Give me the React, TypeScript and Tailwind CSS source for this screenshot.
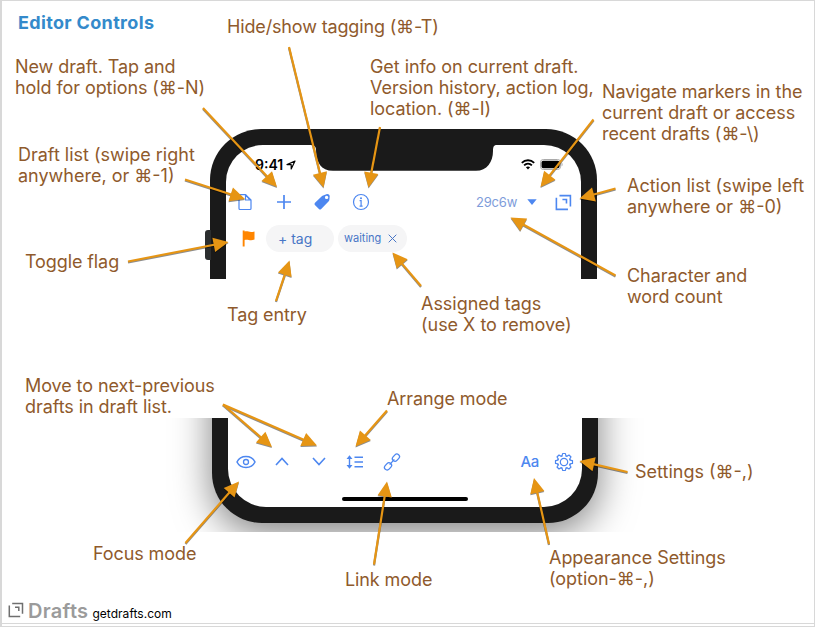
import type { ReactNode } from "react";

type Arrow = [number, number, number, number];

const arrows: Arrow[] = [
  [203, 108, 277, 187],
  [289, 47, 323.5, 187.5],
  [380, 127, 368.5, 187.5],
  [593.5, 119.5, 540.5, 187],
  [185, 179.5, 245, 199],
  [615.5, 188.5, 579.5, 198.5],
  [128, 261.5, 228.5, 242],
  [276, 301, 289.5, 260.5],
  [421, 286, 392.5, 252.5],
  [615.5, 275.5, 510.5, 217.5],
  [223, 404.5, 272, 447],
  [223, 404.5, 317, 445.5],
  [387, 410.5, 355.5, 446.5],
  [185.5, 543, 239, 481.5],
  [374, 564.5, 387, 481.5],
  [549, 544, 534, 478],
  [627.5, 472, 579.5, 461],
];

function Arrows() {
  return (
    <svg className="pointer-events-none absolute inset-0 drop-shadow-[0.5px_1px_0.5px_rgba(0,0,0,0.45)]" width="815" height="627">
      {arrows.map(([x1, y1, x2, y2], i) => {
        const len = Math.hypot(x2 - x1, y2 - y1);
        const angle = (Math.atan2(y2 - y1, x2 - x1) * 180) / Math.PI;
        return (
          <g key={i} transform={`translate(${x1} ${y1}) rotate(${angle})`} fill="#e69514">
            <rect x="0" y="-1.1" width={len - 12} height="2.2" />
            <path d={`M${len} 0l-15 -7.2v14.4z`} />
          </g>
        );
      })}
    </svg>
  );
}

function Note({ at, children }: { at: string; children: ReactNode }) {
  return (
    <p className={`absolute whitespace-pre text-[18px] leading-[21px] text-[#8f5a2c] ${at}`}>{children}</p>
  );
}

function DraftsMark({ size, color }: { size: number; color: string }) {
  return (
    <svg width={size} height={size} viewBox="0 0 16 16" fill="none" stroke={color} strokeWidth="1.5">
      <path d="M4.2 1.5H14.5V11.8" />
      <path d="M1.3 3.6V14.5H12.2" />
      <path d="M7 5.2H10.8V9" />
    </svg>
  );
}

function TopPhone() {
  return (
    <section className="relative ml-[210px] mt-[95px] h-[150px] w-[387px] rounded-t-[51px] bg-[#1a1a1a] px-4 pt-4">
      <div className="absolute left-[-5px] top-[101px] h-[30px] w-[6px] rounded-l-[3px] bg-[#2b2d2e]" />
      <div className="relative flex h-[134px] flex-col rounded-t-[37px] bg-white">
        <svg className="absolute left-[83px] top-[-1px]" width="188" height="27" fill="#1a1a1a">
          <path d="M0 0V1C5 1 7 2 7 6C7 18 12 26.800 24 26.800H167C178 26.800 184 18 184 7C184 2.500 185 1 188 1V0Z" />
        </svg>
        <div className="flex h-9 items-center pl-[29px] pr-[18px] pt-[3px]">
          <span className="text-[14px] font-semibold leading-none text-black">9:41</span>
          <svg className="ml-[3px]" width="10" height="10" viewBox="0 0 10 10" fill="none" stroke="#000" strokeWidth="1.2" strokeLinejoin="round">
            <path d="M9 1L1 4.600H5.200V9Z" />
          </svg>
          <svg className="ml-auto" width="14" height="11" viewBox="0 0 14 11" fill="none" stroke="#000" strokeWidth="1.8">
            <path d="M.8 3.800C4.300.4 9.700.4 13.200 3.800" />
            <path d="M3.100 6.300C5.300 4.200 8.700 4.200 10.900 6.300" />
            <path d="M7 10.500L4.900 8.300C6 7.200 8 7.200 9.100 8.300Z" fill="#000" stroke="none" />
          </svg>
          <svg className="ml-[5px]" width="23" height="11" viewBox="0 0 23 11">
            <rect x=".5" y=".5" width="20" height="10" rx="2.800" fill="#fff" stroke="#aaa" />
            <rect x="1.500" y="1.700" width="18" height="7.600" rx="1.700" />
            <path d="M21.500 3.500C23 4 23 7 21.500 7.500Z" fill="#aaa" />
          </svg>
        </div>
        <div className="flex h-[42px] items-center pl-[10px] text-[#4d87f0]">
          <svg width="18" height="18" viewBox="0 0 18 18" fill="none" stroke="currentColor" strokeWidth="1.2" strokeLinejoin="round">
            <path d="M4 1.600H9.500L15 7V15.500A1 1 0 0 1 14 16.500H4A1 1 0 0 1 3 15.500V2.600A1 1 0 0 1 4 1.600Z" />
            <path d="M9.500 1.600V7H15M9.500 1.600L13.800 7" />
          </svg>
          <svg className="ml-[21px]" width="18" height="18" viewBox="0 0 18 18" stroke="currentColor" strokeWidth="1.700">
            <path d="M9 2V16M2 9H16" />
          </svg>
          <svg className="ml-[20px]" width="18" height="18" viewBox="0 0 18 18" fill="currentColor">
            <path fillRule="evenodd" d="M10.200 2.400L14 1.100Q16.800 1 16.700 3.600L16.400 6.700Q16.200 7.800 15.500 8.600L8.200 16Q7 17.200 5.900 16L1.900 12Q.9 10.900 2 9.700L8.800 3.200Q9.500 2.600 10.200 2.400ZM13.600 2.700A1.700 1.700 0 1 0 13.600 6.100A1.700 1.700 0 1 0 13.600 2.700Z" />
          </svg>
          <svg className="ml-[21px]" width="18" height="18" viewBox="0 0 18 18" fill="none" stroke="currentColor" strokeWidth="1.200">
            <circle cx="9" cy="9" r="7.500" />
            <circle cx="9" cy="5.200" r="1" fill="currentColor" stroke="none" />
            <path d="M7.600 7.700H9.100V13M7.600 13.100H10.600" />
          </svg>
          <span className="ml-[106px] text-[13px] leading-none tracking-[-0.2px] text-[#7e9cda]">29c6w</span>
          <svg className="absolute left-[301px]" width="10" height="6" fill="currentColor">
            <path d="M.3.300H9.700L5 5.900Z" />
          </svg>
          <div className="absolute left-[329px]">
            <DraftsMark size={17} color="#4d87f0" />
          </div>
        </div>
        <div className="flex h-[31px] items-center pl-[16px] text-[#4876c6]">
          <svg width="13" height="17" viewBox="0 0 13 17" fill="#ff8500">
            <path d="M.7.500H2.600V1.600C6 .6 7 3 12.500 1.500V9.600C8 11.300 6 9 2.600 10V16.500H.7Z" />
          </svg>
          <div className="ml-[11px] flex h-[27px] w-[68px] items-center rounded-full bg-[#f5f5f6] pl-3 text-[14px] leading-none">+ tag</div>
          <div className="ml-1 flex h-[27px] w-[69px] items-center rounded-full bg-[#f5f5f6] pl-[6px] text-[11px]">
            waiting
            <svg className="ml-[7px]" width="9" height="9" stroke="currentColor" fill="none">
              <path d="M.7 .7L8.300 8.300M8.300 .7L.7 8.300" />
            </svg>
          </div>
        </div>
      </div>
    </section>
  );
}

function BottomPhone() {
  const teeth = Array.from({ length: 8 }, (_, i) => i * 45);
  return (
    <section className="mt-[139px] ml-[150px] h-[114px] w-[510px] overflow-hidden">
      <div className="-mt-[200px] ml-[62px] h-[305px] w-[386px] rounded-b-[50px] bg-[#1a1a1a] px-4 pb-4 pt-[200px] shadow-[0_10px_38px_rgba(0,0,0,0.5)]">
        <div className="flex h-[89px] flex-col items-center rounded-b-[38px] bg-white">
          <div className="flex h-[76px] w-full items-center pl-[8px] pr-[8px] pt-[11px] text-[#4d87f0]">
            <svg width="20" height="14" viewBox="0 0 20 14" fill="none" stroke="currentColor" strokeWidth="1.500">
              <path d="M1 7C4.600 -.3 15.400 -.3 19 7C15.400 14.300 4.600 14.300 1 7Z" />
              <circle cx="10" cy="7" r="2.500" strokeWidth="1.300" />
            </svg>
            <svg className="ml-[19px]" width="14" height="9" fill="none" stroke="currentColor" strokeWidth="1.600">
              <path d="M1 8L7 1.500L13 8" />
            </svg>
            <svg className="ml-[23px]" width="14" height="9" fill="none" stroke="currentColor" strokeWidth="1.600">
              <path d="M1 1L7 7.500L13 1" />
            </svg>
            <svg className="ml-5" width="18" height="14" fill="none" stroke="currentColor" strokeWidth="1.400">
              <path d="M3.500 2V12M8.500 2.300H17M8.500 7H17M8.500 11.700H17" />
              <path d="M3.500 .2L6.500 4H.5ZM3.500 13.800L6.500 10H.5Z" fill="currentColor" stroke="none" />
            </svg>
            <svg className="ml-[19px]" width="18" height="18" viewBox="0 0 18 18" fill="none" stroke="currentColor" strokeWidth="1.300">
              <g transform="rotate(-48 9 9)">
                <rect x="-.9" y="6.400" width="8" height="5.200" rx="2.600" />
                <rect x="10.900" y="6.400" width="8" height="5.200" rx="2.600" />
                <path d="M5.500 9H12.500" />
              </g>
            </svg>
            <span className="ml-auto mr-[15px] text-[15px] font-medium leading-none tracking-[-0.3px]">Aa</span>
            <svg width="20" height="20" viewBox="-10 -10 20 20" fill="none" stroke="currentColor" strokeWidth="1.200" strokeLinejoin="round">
              <circle r="3.700" />
              {teeth.map((a) => (
                <path key={a} transform={`rotate(${a})`} d="M-3.400 -5.500Q-1.900 -5.900 -1.700 -7L-1.400 -8.500H1.400L1.700 -7Q1.900 -5.900 3.400 -5.500" />
              ))}
            </svg>
          </div>
          <div className="mt-[3px] h-1 w-[126px] rounded-full bg-black" />
        </div>
      </div>
    </section>
  );
}

export default function App() {
  return (
    <main className="relative flex h-[627px] w-[815px] flex-col overflow-hidden border-b border-l-2 border-r border-t border-[#d8d8d8] bg-white font-['Inter',sans-serif]">
      <div className="-ml-[2px] flex h-[623px] flex-col border-b border-[#d8d8d8]">
        <h1 className="ml-[18px] mt-[11px] h-[22px] text-[18px] font-bold leading-[22px] tracking-[0.34px] text-[#348acb]">Editor Controls</h1>
        <TopPhone />
        <BottomPhone />
        <footer className="mt-auto flex h-[22px] items-baseline pl-2">
          <DraftsMark size={16} color="#6f6f6f" />
          <span className="ml-1 text-[20px] font-semibold leading-none tracking-[0.3px] text-[#9b9b9b]">Drafts</span>
          <span className="ml-[4px] text-[12px] leading-none tracking-[0.04px] text-black">getdrafts.com</span>
        </footer>
      </div>
      <div className="absolute -left-[2px] -top-px h-[627px] w-[815px]">
        <Arrows />
        <Note at="left-[227px] top-[16px] tracking-[-0.15px]">Hide/show tagging (⌘-T)</Note>
        <Note at="left-[15px] top-[56px] tracking-[-0.08px]">{"New draft. Tap and\nhold for options (⌘-N)"}</Note>
        <Note at="left-[370px] top-[56px] tracking-[-0.06px]">{"Get info on current draft.\nVersion history, action log,\nlocation. (⌘-I)"}</Note>
        <Note at="left-[602px] top-[81px] tracking-[-0.05px]">{"Navigate markers in the\ncurrent draft or access\nrecent drafts (⌘-\\)"}</Note>
        <Note at="left-[18px] top-[144px]">{"Draft list (swipe right\nanywhere, or ⌘-1)"}</Note>
        <Note at="left-[627px] top-[175px]">{"Action list (swipe left\nanywhere or ⌘-0)"}</Note>
        <Note at="left-[25px] top-[251px] tracking-[-0.1px]">Toggle flag</Note>
        <Note at="left-[227px] top-[304px] tracking-[-0.1px]">Tag entry</Note>
        <Note at="left-[421px] top-[293px] tracking-[-0.03px]">{"Assigned tags\n(use X to remove)"}</Note>
        <Note at="left-[627px] top-[265px] tracking-[-0.05px]">{"Character and\nword count"}</Note>
        <Note at="left-[25px] top-[375px] tracking-[-0.08px]">{"Move to next-previous\ndrafts in draft list."}</Note>
        <Note at="left-[387px] top-[388px] tracking-[-0.1px]">Arrange mode</Note>
        <Note at="left-[93px] top-[543px] tracking-[-0.1px]">Focus mode</Note>
        <Note at="left-[345px] top-[569px] tracking-[-0.1px]">Link mode</Note>
        <Note at="left-[635px] top-[461px]">Settings (⌘-,)</Note>
        <Note at="left-[549px] top-[547px] tracking-[-0.04px]">{"Appearance Settings\n(option-⌘-,)"}</Note>
      </div>
    </main>
  );
}
